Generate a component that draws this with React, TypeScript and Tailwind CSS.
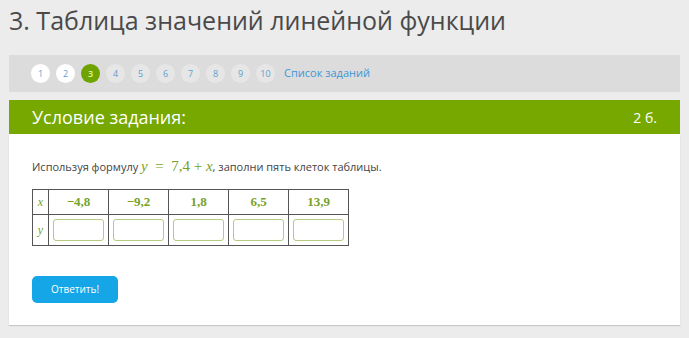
import React from "react";

const xs = ["−4,8", "−9,2", "1,8", "6,5", "13,9"];

export default function App() {
  const nums = [1, 2, 3, 4, 5, 6, 7, 8, 9, 10];
  return (
    <div className="min-h-screen bg-[#ececec] px-[9px] pb-[12px] font-['Open_Sans',sans-serif]">
      <h1 className="pt-[3px] text-[25px] leading-[34px] font-normal text-[#4a4a4a]">
        3. Таблица значений линейной функции
      </h1>

      <div className="mt-[18px] flex h-[37px] items-center gap-[6px] bg-[#dcdcdc] pl-[22px]">
        {nums.map((n) => (
          <span
            key={n}
            className={
              n === 3
                ? "flex h-[19px] w-[19px] items-center justify-center rounded-full bg-[#6ea300] text-[9px] font-semibold text-[#e4f59a]"
                : n < 3
                ? "flex h-[19px] w-[19px] items-center justify-center rounded-full bg-white text-[9px] text-[#5b9fcf]"
                : "flex h-[19px] w-[19px] items-center justify-center rounded-full bg-[#e6e6e6] text-[9px] text-[#5b9fcf]"
            }
          >
            {n}
          </span>
        ))}
        <span className="ml-[3px] text-[11px] text-[#3c97d6]">Список заданий</span>
      </div>

      <div className="mt-[8px] flex h-[34px] items-center justify-between bg-[#77a800] pl-[23px] pr-[23px] text-white">
        <span className="text-[18px]">Условие задания:</span>
        <span className="text-[14px]">2 б.</span>
      </div>

      <div className="bg-white px-[23px] pt-[23px] pb-[22px] shadow-[0_1px_1px_rgba(0,0,0,0.15)]">
        <p className="text-[11px] leading-[18px] text-[#444]">
          Используя формулу&nbsp;
          <span className="font-['Liberation_Serif',serif] text-[15px] text-[#76a22a]">
            <i>y</i>&nbsp;&nbsp;=&nbsp;&nbsp;7,4&nbsp;+&nbsp;<i>x</i>
          </span>
          , заполни пять клеток таблицы.
        </p>

        <table className="mt-[13px] border-collapse border border-[#555] font-['Liberation_Serif',serif] text-[#76a22a]">
          <tbody>
            <tr className="h-[25px]">
              <td className="w-[16px] border border-[#555] text-center text-[12px] italic">x</td>
              {xs.map((v) => (
                <td key={v} className="w-[60px] border border-[#555] text-center text-[13px] font-bold">
                  {v}
                </td>
              ))}
            </tr>
            <tr className="h-[31px]">
              <td className="border border-[#555] text-center text-[12px] italic">y</td>
              {xs.map((v) => (
                <td key={v} className="border border-[#555] px-[4px]">
                  <input
                    type="text"
                    className="block h-[22px] w-full rounded-[3px] border border-[#b3cc80] bg-white outline-none"
                  />
                </td>
              ))}
            </tr>
          </tbody>
        </table>

        <button className="mt-[30px] flex h-[27px] w-[86px] items-center justify-center rounded-[5px] bg-[#14a6e6] text-[10px] text-white">
          Ответить!
        </button>
      </div>
    </div>
  );
}
